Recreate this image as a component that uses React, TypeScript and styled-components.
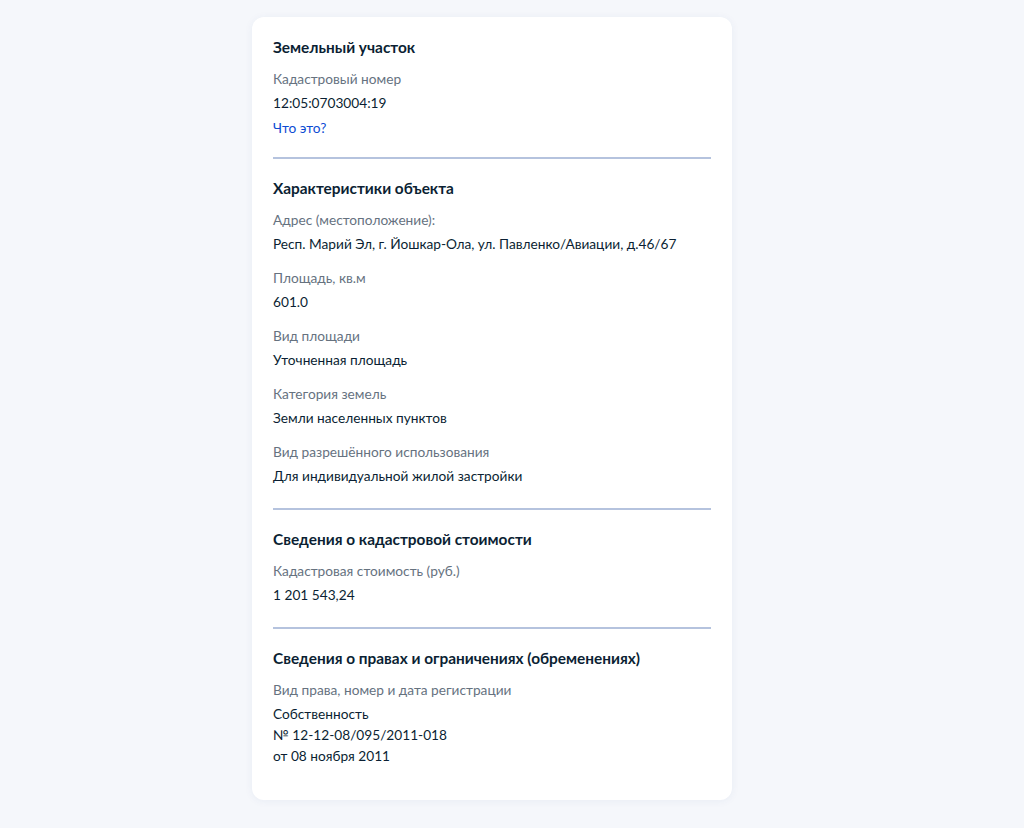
import { createGlobalStyle, styled } from 'styled-components';

type Field = { label: string; value: string[] };
type Section = { title: string; fields: Field[]; link?: string };

const sections: Section[] = [
  {
    title: 'Земельный участок',
    fields: [{ label: 'Кадастровый номер', value: ['12:05:0703004:19'] }],
    link: 'Что это?',
  },
  {
    title: 'Характеристики объекта',
    fields: [
      { label: 'Адрес (местоположение):', value: ['Респ. Марий Эл, г. Йошкар-Ола, ул. Павленко/Авиации, д.46/67'] },
      { label: 'Площадь, кв.м', value: ['601.0'] },
      { label: 'Вид площади', value: ['Уточненная площадь'] },
      { label: 'Категория земель', value: ['Земли населенных пунктов'] },
      { label: 'Вид разрешённого использования', value: ['Для индивидуальной жилой застройки'] },
    ],
  },
  {
    title: 'Сведения о кадастровой стоимости',
    fields: [{ label: 'Кадастровая стоимость (руб.)', value: ['1 201 543,24'] }],
  },
  {
    title: 'Сведения о правах и ограничениях (обременениях)',
    fields: [
      {
        label: 'Вид права, номер и дата регистрации',
        value: ['Собственность', '№ 12-12-08/095/2011-018', 'от 08 ноября 2011'],
      },
    ],
  },
];

const GlobalStyle = createGlobalStyle`
  html, body {
    margin: 0;
    background: #f5f7fb;
    font-family: Lato, "Noto Sans", sans-serif;
    color: #0b1f33;
  }
`;

export default function App() {
  return (
    <>
      <GlobalStyle />
      <Page>
        <Card>
          {sections.map((s, i) => (
            <Block key={s.title} last={i === sections.length - 1}>
              <Title>{s.title}</Title>
              {s.fields.map((f) => (
                <FieldBox key={f.label}>
                  <Label>{f.label}</Label>
                  {f.value.map((v) => (
                    <Value key={v}>{v}</Value>
                  ))}
                </FieldBox>
              ))}
              {s.link && <Link href="#">{s.link}</Link>}
            </Block>
          ))}
        </Card>
      </Page>
    </>
  );
}

const Page = styled.div`
  display: flex;
  justify-content: center;
  padding: 17px 0 28px;
  min-height: 100vh;
  box-sizing: border-box;
`;

const Card = styled.div`
  width: 480px;
  margin-left: -40px;
  background: #fff;
  border-radius: 12px;
  box-shadow: 0 1px 8px rgba(40, 70, 140, 0.06);
  padding: 18px 21px 27px;
  box-sizing: border-box;
`;

const Block = styled.section<{ last?: boolean }>`
  display: flex;
  flex-direction: column;
  padding-bottom: ${(p) => (p.last ? '0' : '22px')};
  margin-bottom: ${(p) => (p.last ? '0' : '17px')};
  border-bottom: ${(p) => (p.last ? 'none' : '2px solid #b5c3de')};
`;

const Title = styled.h2`
  margin: 0 0 9px;
  font-size: 15.4px;
  line-height: 24px;
  font-weight: 700;
  color: #0b1f33;
`;

const FieldBox = styled.div`
  display: flex;
  flex-direction: column;
  & + & {
    margin-top: 13px;
  }
`;

const Label = styled.div`
  font-size: 13.7px;
  line-height: 21px;
  color: #66727f;
  margin-bottom: 3px;
`;

const Value = styled.div`
  font-size: 13.7px;
  line-height: 21px;
  color: #0b1f33;
`;

const Link = styled.a`
  margin-top: 4px;
  margin-bottom: -3px;
  font-size: 13.7px;
  line-height: 21px;
  color: #0d4cd3;
  text-decoration: none;
  align-self: flex-start;
`;
